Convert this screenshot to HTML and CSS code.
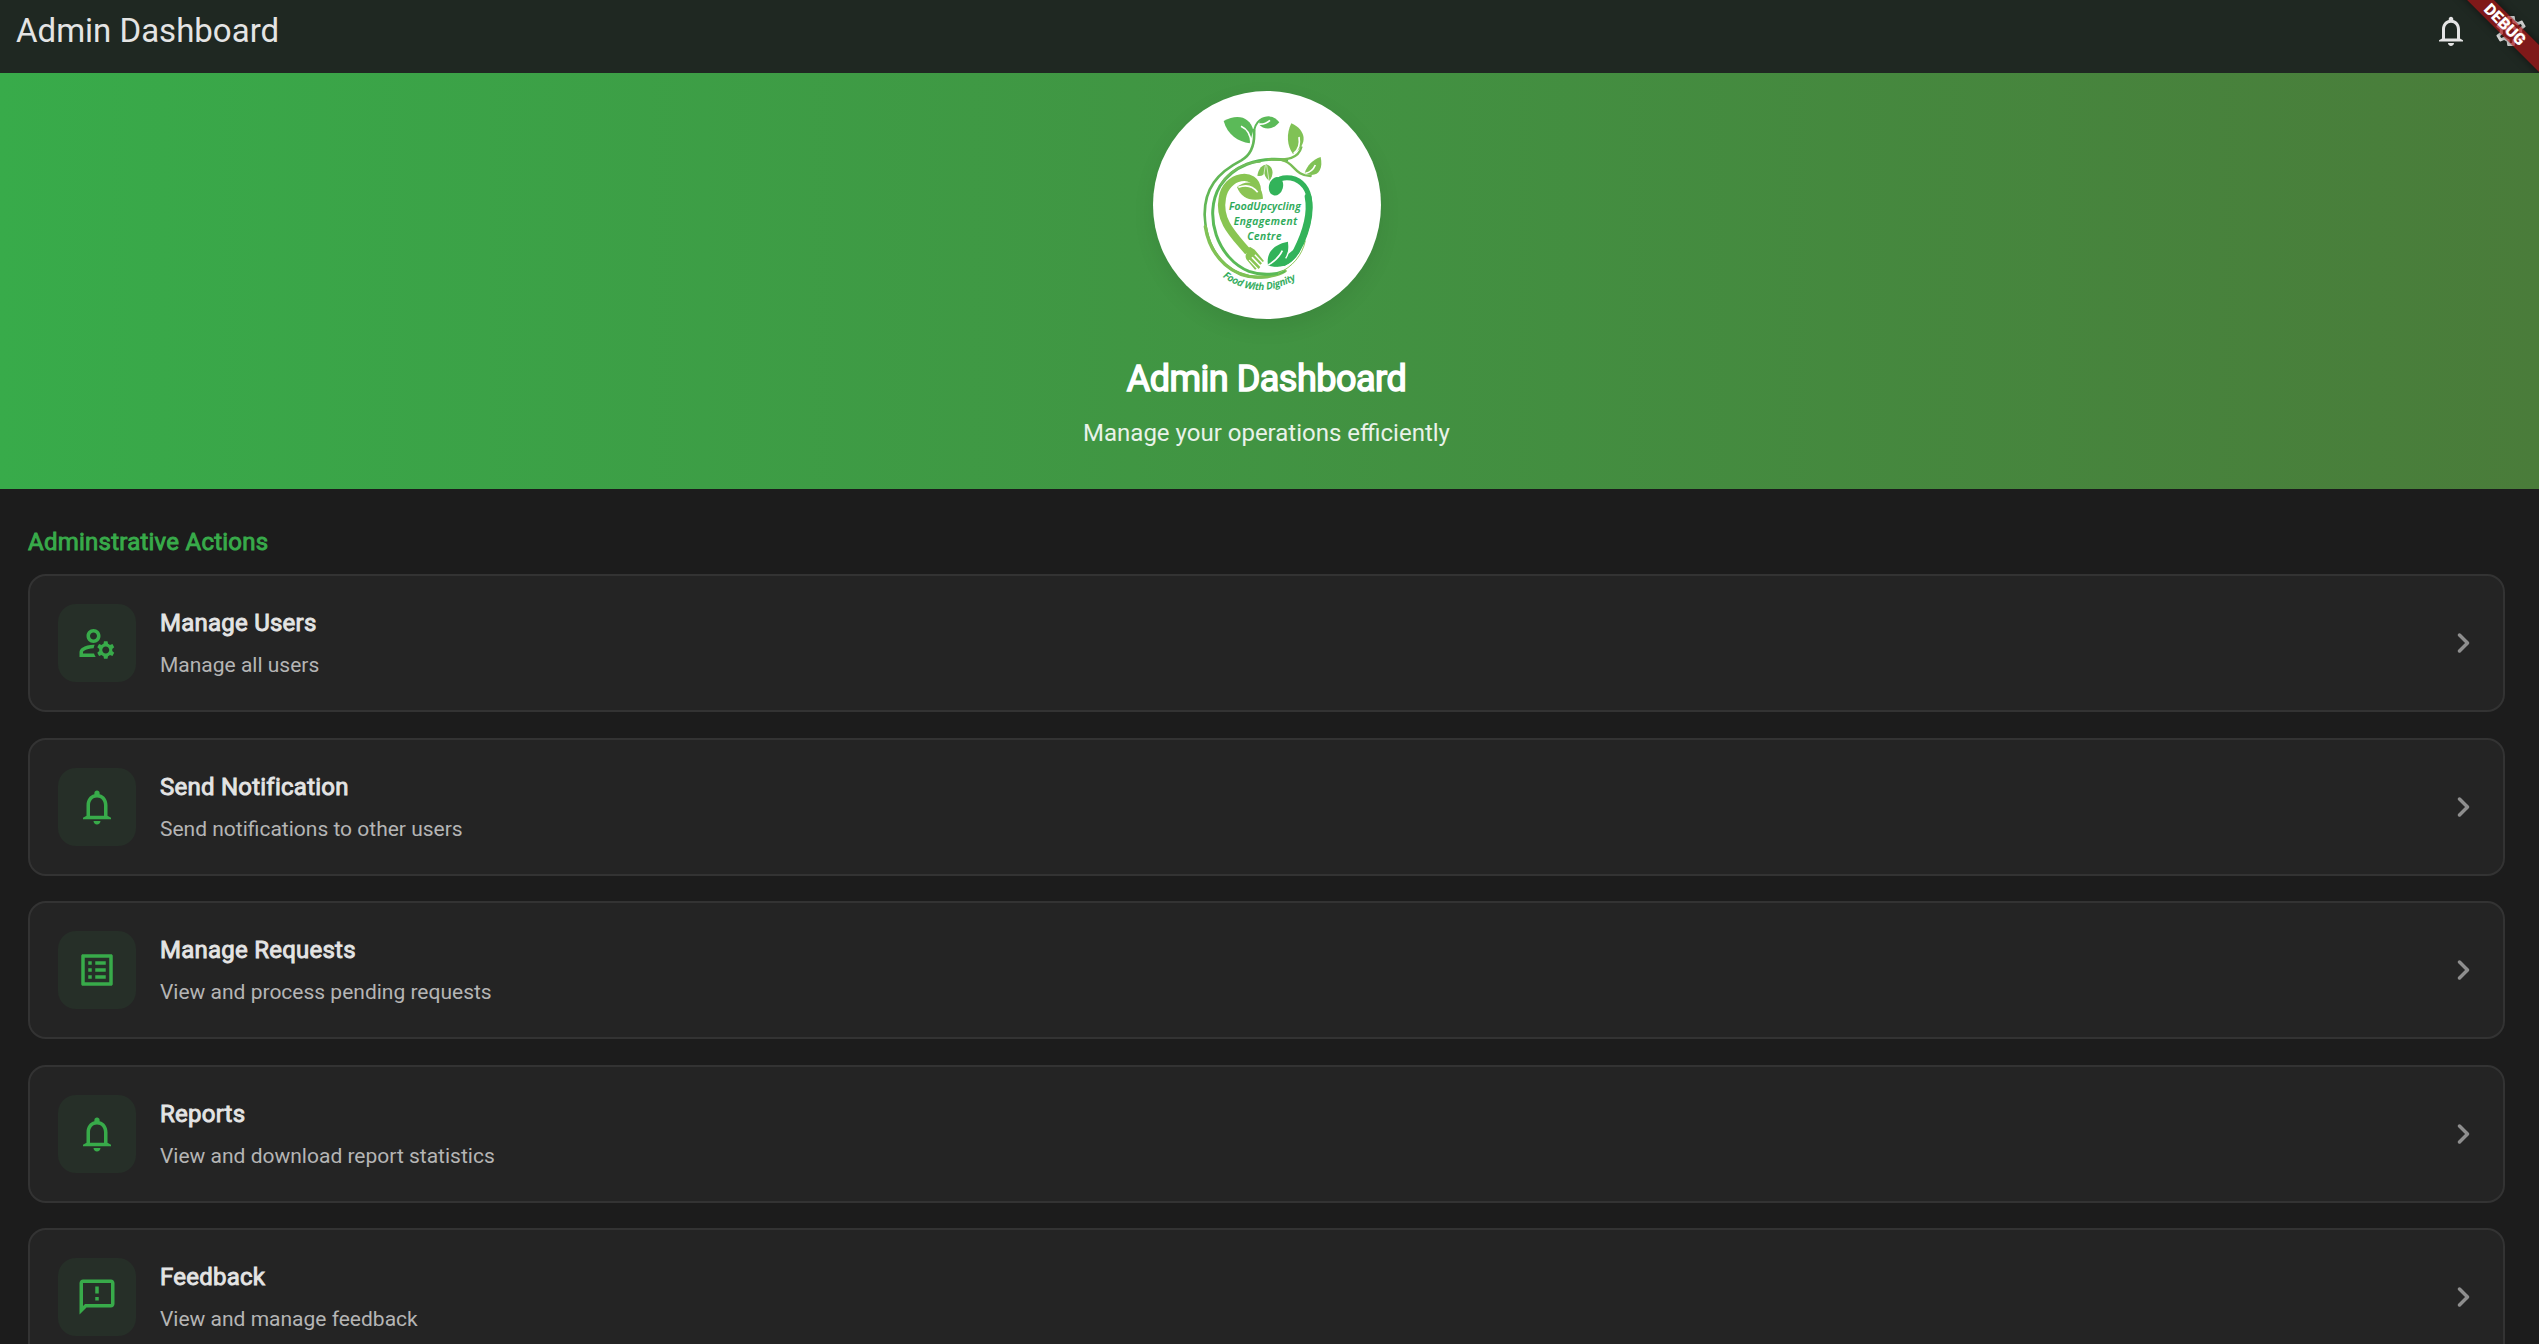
FILE: index.html
```html
<!DOCTYPE html>
<html lang="en">
<head>
<meta charset="utf-8">
<title>Admin Dashboard</title>
<link rel="stylesheet" href="styles.css">
</head>
<body>
<svg class="sprite" aria-hidden="true">
  <symbol id="bell" viewBox="0 0 24 24"><path d="M12 22c1.100 0 2-.9 2-2h-4c0 1.100.9 2 2 2zm6-5v-6c0-3.070-1.630-5.640-4.500-6.320V4c0-.83-.67-1.500-1.500-1.500s-1.500.67-1.500 1.500v.68C7.640 5.360 6 7.920 6 11v6l-2 1.200v.8h16v-.8L18 17zm-2 0H8v-6c0-2.480 1.510-4.500 4-4.500s4 2.020 4 4.500v6z"/></symbol>
  <symbol id="gear" viewBox="0 0 24 24"><path d="M19.43 12.98c.04-.32.07-.64.07-.98 0-.34-.03-.66-.07-.98l2.11-1.65c.19-.15.24-.42.12-.64l-2-3.46c-.09-.16-.26-.25-.44-.25-.06 0-.12.01-.17.03l-2.49 1c-.52-.4-1.08-.73-1.69-.98l-.38-2.65C14.46 2.18 14.25 2 14 2h-4c-.25 0-.46.18-.49.42l-.38 2.65c-.61.25-1.17.59-1.69.98l-2.49-1c-.06-.02-.12-.03-.18-.03-.17 0-.34.09-.43.25l-2 3.46c-.13.22-.07.49.12.64l2.11 1.65c-.04.32-.07.65-.07.98 0 .33.03.66.07.98l-2.11 1.65c-.19.15-.24.42-.12.64l2 3.46c.09.16.26.25.44.25.06 0 .12-.01.17-.03l2.49-1c.52.4 1.08.73 1.69.98l.38 2.65c.03.24.24.42.49.42h4c.25 0 .46-.18.49-.42l.38-2.65c.61-.25 1.17-.59 1.69-.98l2.49 1c.06.02.12.03.18.03.17 0 .34-.09.43-.25l2-3.46c.12-.22.07-.49-.12-.64l-2.11-1.65zm-1.98-1.71c.04.31.05.52.05.73 0 .21-.02.43-.05.73l-.14 1.13.89.7 1.08.84-.7 1.21-1.27-.51-1.04-.42-.9.68c-.43.32-.84.56-1.25.73l-1.06.43-.16 1.13-.2 1.35h-1.4l-.19-1.35-.16-1.13-1.06-.43c-.43-.18-.83-.41-1.23-.71l-.91-.7-1.06.43-1.27.51-.7-1.21 1.08-.84.89-.7-.14-1.13c-.03-.31-.05-.54-.05-.74s.02-.43.05-.73l.14-1.13-.89-.7-1.08-.84.7-1.21 1.27.51 1.04.42.9-.68c.43-.32.84-.56 1.25-.73l1.06-.43.16-1.13.2-1.35h1.39l.19 1.35.16 1.13 1.06.43c.43.18.83.41 1.23.71l.91.7 1.06-.43 1.27-.51.7 1.21-1.07.85-.89.7.14 1.13zM12 8c-2.21 0-4 1.79-4 4s1.79 4 4 4 4-1.79 4-4-1.79-4-4-4zm0 6c-1.1 0-2-.9-2-2s.9-2 2-2 2 .9 2 2-.9 2-2 2z"/></symbol>
  <symbol id="users" viewBox="0 0 24 24"><path d="M4 18v-.65c0-.34.16-.66.41-.81C6.100 15.530 8.030 15 10 15c.03 0 .05 0 .08.01.1-.7.3-1.370.59-1.980-.22-.02-.44-.03-.67-.03-2.420 0-4.680.67-6.610 1.820C2.510 15.340 2 16.320 2 17.350V20h9.260c-.42-.6-.75-1.280-.97-2H4zM10 12c2.210 0 4-1.790 4-4s-1.790-4-4-4-4 1.790-4 4 1.790 4 4 4zm0-6c1.100 0 2 .9 2 2s-.9 2-2 2-2-.9-2-2 .9-2 2-2zM20.750 16c0-.22-.03-.42-.06-.63l1.140-1.010-1-1.730-1.450.49c-.32-.27-.68-.48-1.080-.63L18 11h-2l-.3 1.490c-.4.15-.76.36-1.080.63l-1.450-.49-1 1.730 1.140 1.010c-.03.21-.06.41-.06.63s.03.42.06.63l-1.140 1.010 1 1.730 1.450-.49c.32.27.68.48 1.080.63L16 21h2l.3-1.490c.4-.15.76-.36 1.080-.63l1.450.49 1-1.730-1.140-1.010c.03-.21.06-.41.06-.63zM17 18c-1.100 0-2-.9-2-2s.9-2 2-2 2 .9 2 2-.9 2-2 2z"/></symbol>
  <symbol id="list" viewBox="0 0 24 24"><path d="M11 7h6v2h-6zm0 4h6v2h-6zm0 4h6v2h-6zM7 7h2v2H7zm0 4h2v2H7zm0 4h2v2H7zM20.100 3H3.900c-.5 0-.9.4-.9.9v16.200c0 .4.4.9.9.9h16.200c.4 0 .9-.5.9-.9V3.900c0-.5-.5-.9-.9-.9zM19 19H5V5h14v14z"/></symbol>
  <symbol id="feedback" viewBox="0 0 24 24"><path d="M20 2H4c-1.100 0-1.990.9-1.990 2L2 22l4-4h14c1.100 0 2-.9 2-2V4c0-1.100-.9-2-2-2zm0 14H5.170L4 17.170V4h16v12zm-9-4h2v2h-2zm0-6h2v4h-2z"/></symbol>
  <symbol id="chevron" viewBox="0 0 24 24"><path d="M9.290 6.710c-.39.39-.39 1.020 0 1.410L13.170 12l-3.880 3.880c-.39.39-.39 1.020 0 1.410.39.39 1.020.39 1.410 0l4.590-4.590c.39-.39.39-1.020 0-1.410L10.700 6.700c-.38-.38-1.020-.38-1.410.01z"/></symbol>
</svg>

<header class="appbar">
  <div class="appbar-title">Admin Dashboard</div>
  <div class="actions">
    <svg class="action"><use href="#bell"/></svg>
    <svg class="action"><use href="#gear"/></svg>
  </div>
  <div class="debug">DEBUG</div>
</header>

<section class="hero">
  <div class="logo">
    <svg viewBox="0 0 780 750" role="img" aria-label="FoodUpcycling Engagement Centre">
      <g fill="none" stroke-linecap="round">
        <path d="M342 150C345 190 336 223 304 241C232 278 193 326 194 405C197 510 262 603 385 591" stroke="#62b756" stroke-width="8"/>
        <path d="M196 440C210 530 280 602 375 590C405 587 425 580 435 573" stroke="#80c255" stroke-width="10"/>
        <path d="M440 240C350 229 278 259 240 318C188 405 233 537 327 574C360 586 401 586 431 574" stroke="#5aba57" stroke-width="9"/>
        <path d="M360 245C310 246 264 279 243 312" stroke="#72bd5a" stroke-width="6"/>
        <path d="M415 580C458 560 486 527 496 483" stroke="#92c95d" stroke-width="3"/>
        <path d="M342 170C340 134 357 111 390 113" stroke="#5cb957" stroke-width="6"/>
        <path d="M385 238C445 242 476 234 484 202" stroke="#78bd55" stroke-width="7"/>
        <path d="M428 241C461 246 464 288 512 288" stroke="#79bd55" stroke-width="7"/>
        <path d="M352 330C349 270 257 284 247 354C233 425 287 471 324 516" stroke="#89c552" stroke-width="22" stroke-linecap="butt"/>
        <path d="M410 306C420 291 437 292 453 294C528 311 519 412 485 489C471 518 458 537 433 550" stroke="#32b35a" stroke-width="15"/>
        <path d="M504 350C514 400 498 456 469 513" stroke="#32b35a" stroke-width="20"/>
      </g>
      <g fill="#5bba58">
        <path d="M251 123C294 100 330 112 340 151L329 190C294 185 263 165 251 123Z"/>
        <path d="M356 132C362 107 397 99 418 127C399 151 372 151 356 132Z"/>
      </g>
      <g fill="#80c255">
        <path d="M454 130C497 149 507 193 459 222C441 198 438 162 454 130Z"/>
        <path d="M542 231C551 273 530 295 494 280C501 255 519 239 542 231Z"/>
        <path d="M291 321C315 298 367 300 369 356C331 366 303 353 291 321Z" fill="#8bc454"/>
        <path d="M378 253C398 257 405 281 388 303C370 289 368 269 378 253Z"/>
        <path d="M376 254C361 258 355 270 352 287C372 293 382 273 376 254Z"/>
      </g>
      <g fill="#32b35a">
        <ellipse cx="408" cy="319" rx="21" ry="28" transform="rotate(15 408 319)"/>
        <path d="M444 485C400 493 378 519 384 556C424 571 454 543 444 485Z"/>
        <path d="M383 553C414 568 454 562 481 512L462 508L414 548Z"/>
      </g>
      <path d="M313 506L331 501L344 509L372 543L368 546L346 523L343 526L366 550L361 554L338 530L334 533L361 561L356 567L329 539L326 541L350 566L345 569L319 538Q314 528 320 518Z" fill="#89c552"/>
      <g fill="none" stroke="#fff" stroke-width="5">
        <path d="M303 139Q332 152 333 190"/>
        <path d="M355 132Q374 135 390 121"/>
        <path d="M461 220Q483 204 477 171"/>
        <path d="M496 280Q517 276 526 255"/>
        <path d="M295 322Q331 308 353 337"/>
        <path d="M385 555Q415 537 427 512"/>
        <path d="M446 484Q452 512 437 535" stroke-width="4"/>
        <path d="M380 256L387 303M376 256L371 288" stroke-width="2"/>
      </g>
      <g class="wordmark">
        <text x="267" y="391" textLength="215">FoodUpcycling</text>
        <text x="281" y="435" textLength="190">Engagement</text>
        <text x="322" y="479" textLength="102">Centre</text>
        <path id="arc" d="M248 590Q354 668 478 592" fill="none" stroke="none"/>
        <text class="motto"><textPath href="#arc" textLength="234">Food With Dignity</textPath></text>
      </g>
    </svg>
  </div>
  <h1>Admin Dashboard</h1>
  <p>Manage your operations efficiently</p>
</section>

<main>
  <h2>Adminstrative Actions</h2>
  <div class="cards">
    <article class="card"><div class="tile"><svg><use href="#users"/></svg></div><div class="copy"><h3>Manage Users</h3><p>Manage all users</p></div><svg class="chevron"><use href="#chevron"/></svg></article>
    <article class="card"><div class="tile"><svg><use href="#bell"/></svg></div><div class="copy"><h3>Send Notification</h3><p>Send notifications to other users</p></div><svg class="chevron"><use href="#chevron"/></svg></article>
    <article class="card"><div class="tile"><svg><use href="#list"/></svg></div><div class="copy"><h3>Manage Requests</h3><p>View and process pending requests</p></div><svg class="chevron"><use href="#chevron"/></svg></article>
    <article class="card"><div class="tile"><svg><use href="#bell"/></svg></div><div class="copy"><h3>Reports</h3><p>View and download report statistics</p></div><svg class="chevron"><use href="#chevron"/></svg></article>
    <article class="card"><div class="tile"><svg><use href="#feedback"/></svg></div><div class="copy"><h3>Feedback</h3><p>View and manage feedback</p></div><svg class="chevron"><use href="#chevron"/></svg></article>
  </div>
</main>
</body>
</html>
```
FILE: styles.css
```css
* { box-sizing: border-box; }
html, body { height: 100%; }
body {
  margin: 0;
  overflow: hidden;
  background: #1c1c1c;
  color: #e4e4e4;
  font-family: Roboto, sans-serif;
}
h1, h2, h3, p { margin: 0; font-weight: 400; white-space: nowrap; }
svg { display: block; fill: currentColor; }
.sprite { position: absolute; width: 0; height: 0; }

.appbar {
  position: relative;
  display: flex;
  justify-content: space-between;
  height: 73px;
  padding: 11px 10px 0 16px;
  overflow: hidden;
  background: #1f2822;
}
.appbar-title { font-size: 33px; line-height: 40px; }
.actions { display: flex; gap: 24px; }
.action { width: 36px; height: 36px; margin-top: 2px; }
.debug {
  position: absolute;
  top: 15px;
  right: -66px;
  width: 200px;
  height: 19px;
  background: rgba(168, 18, 22, .7);
  box-shadow: 0 0 9px rgba(0, 0, 0, .5);
  color: #fff;
  font-size: 16px;
  font-weight: 900;
  line-height: 19px;
  text-align: center;
  transform: rotate(45deg);
}

.hero {
  display: flex;
  flex-direction: column;
  align-items: center;
  height: 415.5px;
  padding: 18px 6px 0 0;
  background: linear-gradient(90deg, #38ab4a, #4a7c3a);
  color: #fff;
}
.logo {
  width: 228px;
  height: 228px;
  border-radius: 50%;
  background: #fff;
  box-shadow: 0 8px 22px rgba(0, 0, 0, .08);
}
.logo svg { width: 260px; height: 250px; margin: -11px 0 0 -12.500px; }
.wordmark { fill: #27a854; stroke: #27a854; stroke-width: .6px; font: italic 600 31px "Open Sans", sans-serif; }
.motto { font-size: 29px; }
.hero h1 { margin-top: 36px; font-size: 36px; line-height: 48px; letter-spacing: -.5px; -webkit-text-stroke: 1.500px; }
.hero p { margin-top: 14px; font-size: 24px; line-height: 32px; color: #e9f2e9; }

main { padding: 36.500px 34px 0 28px; }
h2 { font-size: 24px; line-height: 34px; letter-spacing: .24px; color: #38ab4a; -webkit-text-stroke: .9px; }
.cards { display: grid; gap: 25.500px; margin-top: 15px; }
.card {
  display: flex;
  align-items: center;
  height: 138px;
  padding: 0 19px 0 28px;
  border: 2px solid #333;
  border-radius: 18px;
  background: #242424;
}
.tile {
  display: grid;
  place-items: center;
  width: 78px;
  height: 78px;
  border-radius: 18px;
  background: #262f28;
  color: #38ab4a;
}
.tile svg { width: 42px; height: 42px; }
.copy { flex: 1; padding: 1.200px 0 0 24px; }
h3 { font-size: 24px; line-height: 34px; letter-spacing: .24px; -webkit-text-stroke: .9px; }
.copy p { margin-top: 9px; font-size: 21px; line-height: 32px; color: #b5b5b5; }
.chevron { width: 42px; height: 42px; color: #8e8e8e; }
```
